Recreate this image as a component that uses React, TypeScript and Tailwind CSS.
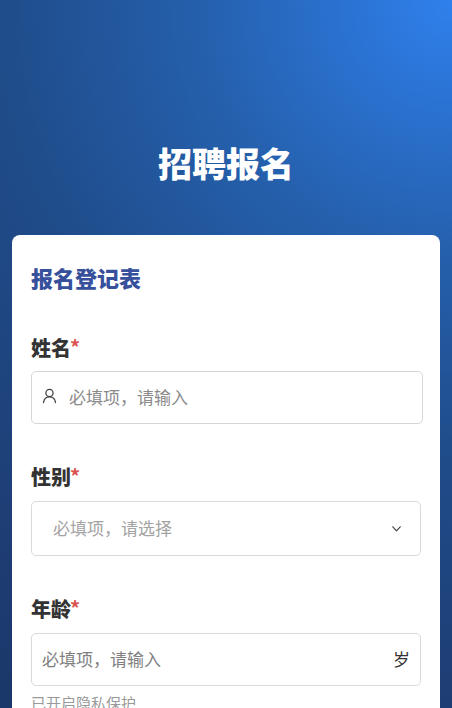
import React from "react";

const font = { fontFamily: '"Noto Sans CJK SC", "Noto Sans", sans-serif' };

function Label({ text }: { text: string }) {
  return (
    <div className="h-[26px] flex items-start text-[20px] leading-[26px] font-black text-[#333333]">
      {text}
      <span className="text-[#d9534f] font-bold -ml-[1px] -mt-[1px]">*</span>
    </div>
  );
}

export default function App() {
  return (
    <div
      className="h-[708px] overflow-hidden bg-[radial-gradient(circle_at_100%_0%,#2f80ed_0px,#2560ad_250px,#1f4c8a_452px,#1e3c72_720px,#1a3768_860px)] flex flex-col px-3"
      style={font}
    >
      <h1 className="mt-[141px] h-[44px] text-center text-[34px] leading-[44px] font-black text-white">招聘报名</h1>
      <div className="mt-[50px] flex-1 rounded-t-[8px] bg-white pt-[27px] pl-[19px] pr-[17px]">
        <h2 className="text-[22px] leading-[30px] font-black text-[#37509c]">报名登记表</h2>

        <div className="mt-[43px]">
          <Label text="姓名" />
        </div>
        <div className="mt-[10px] h-[53px] w-[392px] rounded-[5px] border border-[#d6d6d6] flex items-center pl-[10px]">
          <svg width="15" height="16" viewBox="0 0 15 16" fill="none" stroke="#444" strokeWidth="1.3" className="-mt-[3px]">
            <circle cx="7.5" cy="5" r="3.6" />
            <path d="M1.5 14.5c.5-3.4 2.7-5.6 6-5.600s5.500 2.200 6 5.600" strokeLinecap="round" />
          </svg>
          <span className="ml-[12px] -mt-[1px] text-[17px] text-[#8a8a8a]">必填项，请输入</span>
        </div>

        <div className="mt-[40px]">
          <Label text="性别" />
        </div>
        <div className="mt-[11px] h-[55px] w-[390px] rounded-[5px] border border-[#dadada] flex items-center justify-between pl-[21px] pr-[19px]">
          <span className="-mt-[1px] text-[17px] text-[#a3a3a3]">必填项，请选择</span>
          <svg width="9" height="6" viewBox="0 0 9 6" fill="none" stroke="#444" strokeWidth="1.200" strokeLinecap="round" strokeLinejoin="round">
            <path d="M.8.8 4.500 4.800 8.200.8" />
          </svg>
        </div>

        <div className="mt-[40px]">
          <Label text="年龄" />
        </div>
        <div className="mt-[11px] h-[53px] w-[390px] rounded-[5px] border border-[#dadada] flex items-center justify-between pl-[10px] pr-[10px]">
          <span className="-mt-[1px] text-[17px] text-[#7f7f7f]">必填项，请输入</span>
          <span className="-mt-[1px] text-[17px] text-[#333333]">岁</span>
        </div>

        <div className="mt-[7px] text-[15px] leading-[20px] text-[#999999]">已开启隐私保护</div>
      </div>
    </div>
  );
}
